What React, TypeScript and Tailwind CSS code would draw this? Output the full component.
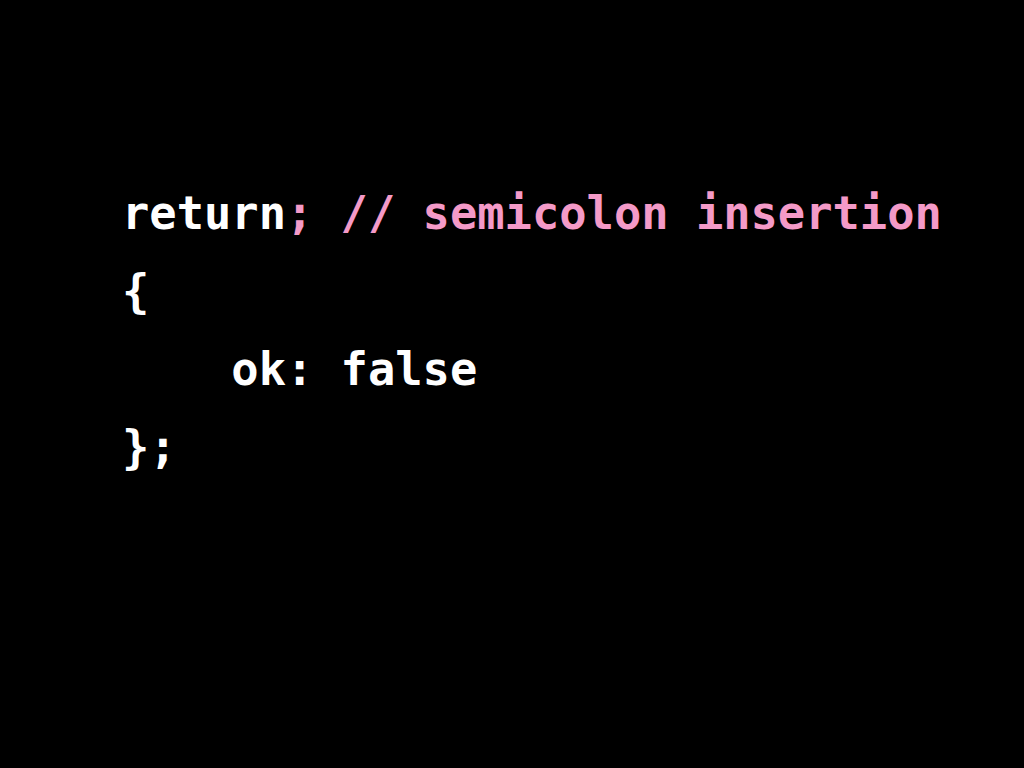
import React from "react";

export default function App() {
  const pink = "text-[#f49ac8]";
  return (
    <div className="w-[1024px] h-[768px] bg-black overflow-hidden pt-[175px] pl-[122px]">
      <pre
        className="m-0 text-[45.4px] leading-[78px] font-bold text-white whitespace-pre"
        style={{ fontFamily: '"DejaVu Sans Mono", monospace' }}
      >
        <div>
          return<span className={pink}>; // semicolon insertion</span>
        </div>
        <div>{"{"}</div>
        <div>{"    ok: false"}</div>
        <div>{"};"}</div>
      </pre>
    </div>
  );
}
